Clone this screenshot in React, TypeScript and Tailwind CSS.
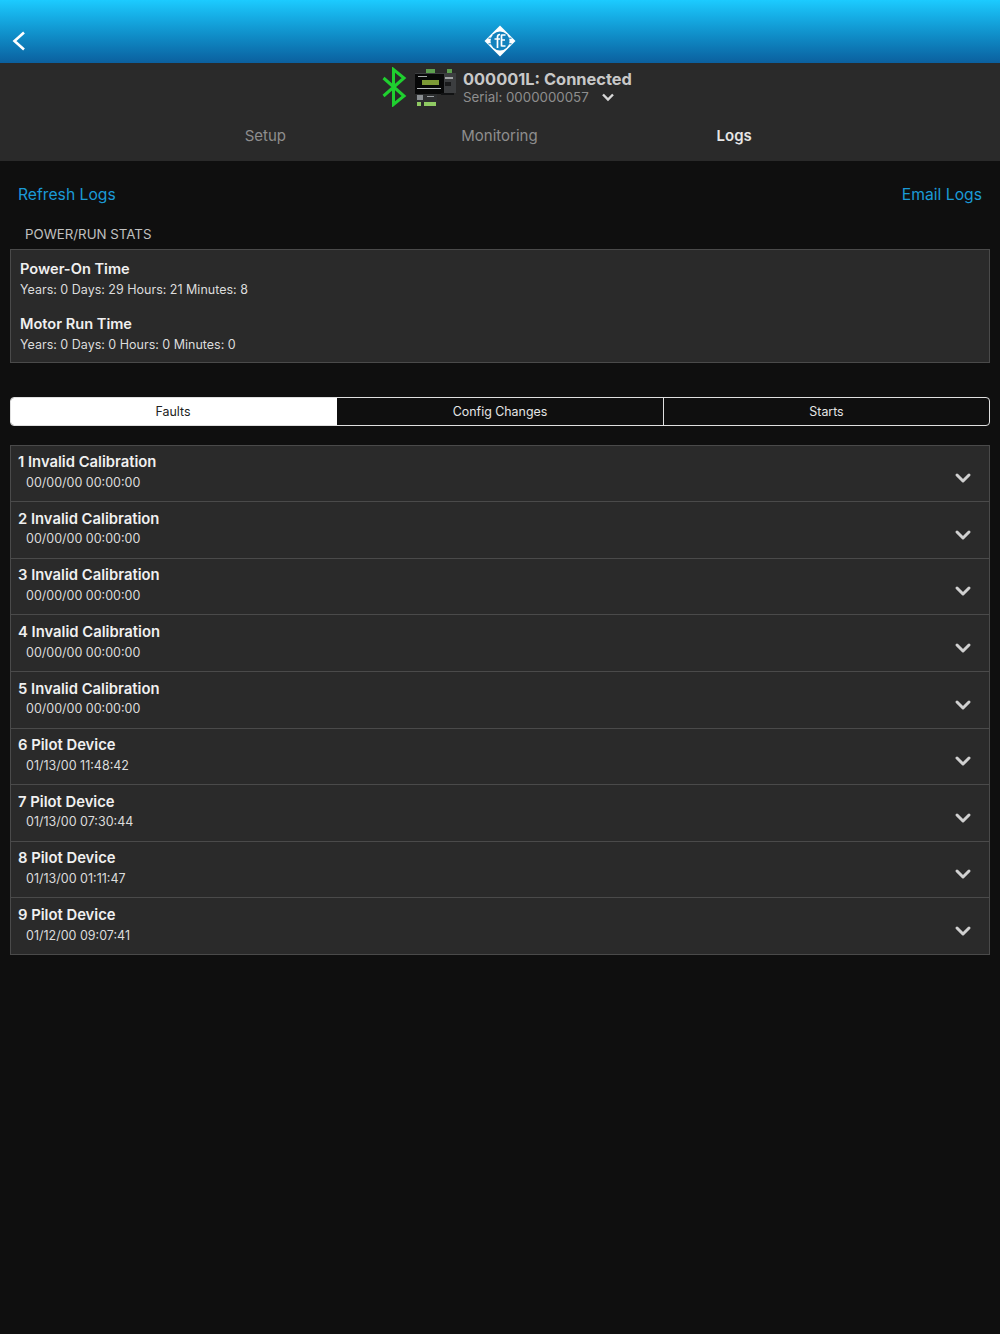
import React from 'react';
import { ChevronDown } from 'lucide-react';

const faults = [
  { title: '1 Invalid Calibration', date: '00/00/00 00:00:00' },
  { title: '2 Invalid Calibration', date: '00/00/00 00:00:00' },
  { title: '3 Invalid Calibration', date: '00/00/00 00:00:00' },
  { title: '4 Invalid Calibration', date: '00/00/00 00:00:00' },
  { title: '5 Invalid Calibration', date: '00/00/00 00:00:00' },
  { title: '6 Pilot Device', date: '01/13/00 11:48:42' },
  { title: '7 Pilot Device', date: '01/13/00 07:30:44' },
  { title: '8 Pilot Device', date: '01/13/00 01:11:47' },
  { title: '9 Pilot Device', date: '01/12/00 09:07:41' },
];

const Logo = () => (
  <svg width="32" height="32" viewBox="0 0 32 32">
    <path d="M16 0.5 L31.5 16 L16 31.5 L0.5 16 Z" fill="#fff" />
    <circle cx="16" cy="16" r="9.5" fill="#1382bd" />
    <path d="M4.5 13.2 H8 M24 13.2 H27.5 M4.5 18.8 H8 M24 18.8 H27.5" stroke="#1382bd" strokeWidth="1" />
    <path d="M13.5 23 V12 Q13.5 9.5 16 9.5 M10.5 14 H16 M17.5 9.5 V21.5 M17.5 10 H21.5 M17.5 15 H21 M17.5 21 H21.5" stroke="#fff" strokeWidth="1.7" fill="none" />
  </svg>
);

const Bluetooth = () => (
  <svg width="26" height="40" viewBox="0 0 26 40" fill="none">
    <path d="M2.5 11 L23 29 L12.5 37.5 V2.5 L23 11 L2.5 29" stroke="#1fd02f" strokeWidth="3" />
  </svg>
);

const Device = () => (
  <svg width="42" height="38" viewBox="0 0 42 38">
    <rect x="12" y="1" width="9" height="4" fill="#5da04f" />
    <rect x="33" y="1" width="5" height="4" fill="#5da04f" />
    <rect x="1" y="5" width="41" height="20" fill="#3c3e40" />
    <rect x="1" y="6" width="29" height="20" fill="#070808" />
    <rect x="8" y="12" width="17" height="5" fill="#7c9a35" />
    <rect x="4" y="8" width="9" height="1" fill="#a5a8aa" />
    <rect x="3" y="20" width="24" height="1" fill="#b4b8ba" />
    <rect x="31" y="9" width="8" height="2" fill="#a0a3a5" />
    <rect x="31" y="14" width="6" height="4" fill="#1a1b1c" />
    <rect x="2" y="26" width="21" height="8" fill="#2c2e2f" />
    <rect x="3" y="27" width="6" height="5" fill="#8a8f92" />
    <rect x="13" y="28" width="7" height="1" fill="#9a9fa2" />
    <rect x="27" y="25" width="13" height="2" fill="#111213" />
    <rect x="3" y="34" width="4" height="4" fill="#8fca63" />
    <rect x="10" y="34" width="12" height="4" fill="#8fca63" />
  </svg>
);

export default function App() {
  return (
    <div className="min-h-[1334px] bg-[#0f0f0f] font-['Inter','Liberation_Sans',sans-serif] text-white">
      <div className="h-[63px] bg-gradient-to-b from-[#1ccbff] to-[#0b609f] relative flex items-center justify-center pt-[18px]">
        <button className="absolute left-[12px] top-[31px] text-white">
          <svg width="14" height="20" viewBox="0 0 14 20" fill="none">
            <path d="M12 1.5 L2.5 10 L12 18.5" stroke="currentColor" strokeWidth="2.6" />
          </svg>
        </button>
        <Logo />
      </div>

      <div className="h-[98px] bg-[#2a2a2a] flex flex-col">
        <div className="h-[47px] flex items-center justify-center gap-[7px] pl-[14px]">
          <Bluetooth />
          <Device />
          <div className="w-[170px]">
            <div className="text-[16.4px] leading-[20px] font-bold text-[#c8c8c8] whitespace-nowrap">000001L: Connected</div>
            <div className="mt-[1px] flex items-center text-[13.3px] leading-[14px] text-[#8e8e8e] whitespace-nowrap">
              Serial: 0000000057
              <svg width="12" height="9" viewBox="0 0 12 9" fill="none" className="ml-[13px]">
                <path d="M1 1.5 L6 6.5 L11 1.5" stroke="#d8d8d8" strokeWidth="2.4" />
              </svg>
            </div>
          </div>
        </div>
        <div className="grid grid-cols-3 px-[148px] mt-[14px] text-[15px] leading-[24px] text-center">
          <span className="text-[#8e8e8e]">Setup</span>
          <span className="text-[#8e8e8e] pr-[1px]">Monitoring</span>
          <span className="font-semibold text-[#e6e6e6] pr-[1px]">Logs</span>
        </div>
      </div>

      <div className="flex justify-between px-[18px] pt-[22px] text-[15.7px] leading-[24px] text-[#1b9ad6]">
        <span>Refresh Logs</span>
        <span>Email Logs</span>
      </div>

      <div className="px-[25px] mt-[17px] text-[13.3px] leading-[20px] text-[#c0c0c0]">POWER/RUN STATS</div>

      <div className="mx-[10px] mt-[5px] h-[114px] bg-[#2a2a2a] border border-[#4a4a4a] px-[9px] pt-[9px]">
        <div className="text-[14.6px] leading-[20px] font-semibold text-[#f0f0f0]">Power-On Time</div>
        <div className="mt-[1px] text-[12.5px] leading-[20px] text-[#dcdcdc]">Years: 0 Days: 29 Hours: 21 Minutes: 8</div>
        <div className="mt-[14px] text-[14.6px] leading-[20px] font-semibold text-[#f0f0f0]">Motor Run Time</div>
        <div className="mt-[1px] text-[12.5px] leading-[20px] text-[#dcdcdc]">Years: 0 Days: 0 Hours: 0 Minutes: 0</div>
      </div>

      <div className="mx-[10px] mt-[34px] h-[29px] grid grid-cols-3 border border-[#e0e0e0] rounded-[4px] overflow-hidden text-[12.4px] leading-[27px] text-center">
        <div className="bg-white text-[#222] pr-[2px]">Faults</div>
        <div className="text-[#e6e6e6]">Config Changes</div>
        <div className="border-l border-[#e0e0e0] text-[#e6e6e6]">Starts</div>
      </div>

      <div className="mx-[10px] mt-[18.6px] border border-[#4a4a4a] border-b-0 bg-[#2a2a2a]">
        {faults.map((f) => (
          <div key={f.title} className="h-[56.6px] border-b border-[#4a4a4a] flex items-start justify-between pl-[7px] pr-[14px] pt-[6.6px]">
            <div>
              <div className="text-[14.8px] leading-[20px] font-semibold text-[#f0f0f0]">{f.title}</div>
              <div className="mt-[0.6px] ml-[8px] text-[12.5px] leading-[20px] text-[#dcdcdc]">{f.date}</div>
            </div>
            <ChevronDown size={24} strokeWidth={3} className="mt-[14px] text-[#d0d0d0]" />
          </div>
        ))}
      </div>
    </div>
  );
}
